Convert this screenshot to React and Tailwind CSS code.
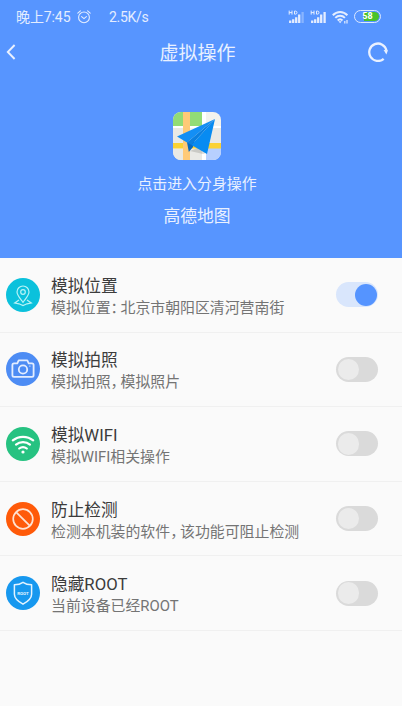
import React, { useState } from 'react';

const FONT = "font-['Roboto','Noto_Sans_CJK_SC',sans-serif]";

// Full-width punctuation, tightened so it only takes part of its em box
const Punct = ({ children }) => <span className="tracking-[-5px]">{children}</span>;

const SignalIcon = ({ full }) => (
    <svg className="h-[14px] w-[22px]" viewBox="0 0 22 14" fill="none" stroke="#e4edff">
        <path d="M1.2.6v4M4 .6v4M1.2 2.6H4M6.5 1.1v3h1.2c1.7 0 1.7-3 0-3z" strokeWidth="1" />
        <path d="M2.2 10.6V13M5.2 9.2V13M8.2 7.2V13M11.2 4.6V13" strokeWidth="2.3" />
        <path d="M14.6 2v11" strokeWidth="2.3" opacity={full ? 1 : 0.35} />
    </svg>
);

const StatusBar = () => (
    <div className="flex h-8 items-center pt-px pl-4 pr-[21px] text-[14px] leading-none text-[#e4edff]">
        <span className="w-[56px] whitespace-nowrap tracking-[-0.1px]">晚上7:45</span>
        <svg className="ml-[5px] h-[14px] w-[14px]" viewBox="0 0 14 14" fill="none" stroke="currentColor" strokeWidth="1.1" strokeLinecap="round">
            <circle cx="7" cy="7.4" r="5.4" />
            <path d="M.8 3.2 3.4.9M13.2 3.2 10.6.9M4.6 6.6 7 8.6l2.4-2" />
        </svg>
        <span className="ml-[18px] tracking-[-0.3px]">2.5K/s</span>
        <div className="ml-auto flex items-center">
            <SignalIcon />
            <SignalIcon full />
            <svg className="h-[14px] w-[17px]" viewBox="0 0 17 14" fill="none" stroke="currentColor" strokeWidth="2">
                <path d="M.8 5.2c4.2-4.3 10.4-4.3 14.6 0M3.3 7.9c2.7-2.8 6.9-2.8 9.6 0M5.7 10.5c1.4-1.4 3.4-1.4 4.8 0" />
                <path d="M6.5 11.3 8.1 13.2l1.6-1.9z" fill="currentColor" stroke="none" />
                <path d="M12.8 11V13.4M15 10V13.4" strokeWidth="1.2" />
            </svg>
            <div className="ml-[5px] flex h-[13px] w-[27px] overflow-hidden rounded-full border-[1.5px] border-[#dce8ff] p-px">
                <div className="flex h-full w-full items-center justify-center rounded-full bg-[linear-gradient(90deg,#5795ff_0_34%,#4bc32a_34%)] text-[9px] font-bold leading-none text-white">
                    58
                </div>
            </div>
        </div>
    </div>
);

const MapLogo = () => (
    <svg className="h-12 w-12" viewBox="0 0 48 48">
        <defs>
            <clipPath id="logoClip">
                <rect width="48" height="48" rx="8" />
            </clipPath>
        </defs>
        <g clipPath="url(#logoClip)">
            <path fill="#f3f3ee" d="M0 0h48v48H0z" />
            <path fill="#92dc76" d="M0 0h29v14H0z" />
            <path fill="#e9e9e5" d="M0 16h10v15H0zM33 16h15v15H33zM0 37h10v11H0zM17 37h12v11H17z" />
            <path fill="#fff" d="M29 0h4v48h-4zM0 14h48v2H0z" />
            <path fill="#b7d0ff" d="M33 36h15v12H33z" />
            <path fill="#fbd233" d="M0 31h48v5.5H0z" />
            <path fill="#ffca78" d="M10 0h7v48h-7z" />
            <path fill="#706f66" opacity=".25" d="m17 39 10-4 6 6-3 1z" />
        </g>
        <path fill="#138ff5" d="M42 7 4 24.5l10 6z" />
        <path fill="#0869bd" d="m14 30.5 1.8 9.5 4.2-5 2-8z" />
        <path fill="#078bf2" d="M42 7 18.5 33 34 42z" />
        <path fill="#0a7fe0" d="M42 7 14 30.5l4.5 2.5z" />
    </svg>
);

const LocationIcon = () => (
    <g stroke="#b9f3f6" strokeWidth="1.2">
        <path d="M17 24.3c-2.2-3-6-7-6-10.3a6 6 0 0 1 12 0c0 3.3-3.8 7.3-6 10.3z" />
        <circle cx="17" cy="14" r="2.3" />
        <path d="m13 22-4.3 3 4.3.8 4 1.7 4-1.7 4.3-.8-4.3-3" />
    </g>
);

const CameraIcon = () => (
    <g stroke="#e3edff" strokeWidth="1.8" strokeLinejoin="round">
        <path d="M8 11.3h3.3l1.4-3h8.6l1.4 3H26a1.6 1.6 0 0 1 1.6 1.6v10.3a1.6 1.6 0 0 1-1.6 1.6H8a1.6 1.6 0 0 1-1.6-1.6V12.9A1.6 1.6 0 0 1 8 11.3z" />
        <circle cx="17" cy="17.5" r="4.2" />
        <path d="M23.4 14.2h1" strokeWidth="1.3" />
    </g>
);

const WifiIcon = () => (
    <g stroke="#fff" strokeWidth="2.2" strokeLinecap="round">
        <path d="M6.8 13.4c5.8-4.8 14.6-4.8 20.4 0M10 17.6c4-3.4 10-3.4 14 0M13.2 21.5c2.3-1.8 5.3-1.8 7.6 0" />
        <circle cx="17" cy="25" r="1.6" fill="#fff" stroke="none" />
    </g>
);

const BlockIcon = () => (
    <g stroke="#ffe3d2" strokeWidth="1.7">
        <circle cx="17" cy="17" r="9.8" />
        <path d="m10.1 10.1 13.8 13.8" />
    </g>
);

const RootIcon = () => (
    <g>
        <path d="M17 6.3c2.5 1.7 5.3 2.4 8.6 2.5v9.4c0 4.3-4 7.4-8.6 10-4.6-2.6-8.6-5.7-8.6-10V8.8c3.3-.1 6.1-.8 8.6-2.5z" stroke="#e2f3ff" strokeWidth="1.5" strokeLinejoin="round" />
        <text x="17" y="18.6" textAnchor="middle" fontSize="4.4" fontWeight="700" fill="#e2f3ff">ROOT</text>
    </g>
);

const ITEMS = [
    { id: 'location', title: '模拟位置', desc: <>模拟位置<Punct>：</Punct>北京市朝阳区清河营南街</>, color: 'bg-[#0bc1dc]', Icon: LocationIcon },
    { id: 'photo', title: '模拟拍照', desc: <>模拟拍照<Punct>，</Punct>模拟照片</>, color: 'bg-[#4d8cf4]', Icon: CameraIcon },
    { id: 'wifi', title: '模拟WIFI', desc: '模拟WIFI相关操作', color: 'bg-[#26c281]', Icon: WifiIcon },
    { id: 'detect', title: '防止检测', desc: <>检测本机装的软件<Punct>，</Punct>该功能可阻止检测</>, color: 'bg-[#ff5a09]', Icon: BlockIcon },
    { id: 'root', title: '隐藏ROOT', desc: '当前设备已经ROOT', color: 'bg-[#1798ef]', Icon: RootIcon },
];

const Toggle = ({ on, onClick }) => (
    <button
        type="button"
        role="switch"
        aria-checked={on}
        onClick={onClick}
        className={`flex h-[25px] w-[42px] shrink-0 items-center rounded-full ${
            on ? 'justify-end bg-[#d9e6fc] pr-[1.5px]' : 'bg-[#dadada] pl-[1.5px]'
        }`}
    >
        <span className={`h-[21.5px] w-[21.5px] rounded-full ${on ? 'bg-[#5594ff]' : 'bg-[#ebebeb]'}`} />
    </button>
);

const App = () => {
    const [enabled, setEnabled] = useState({ location: true });

    const toggle = (id) => setEnabled((prev) => ({ ...prev, [id]: !prev[id] }));

    return (
        <div className={`h-[706px] w-full overflow-hidden bg-[#fafafa] ${FONT}`}>
            {/* Header */}
            <header className="h-[258px] bg-[#5795ff] text-[#eaf1ff]">
                <StatusBar />
                <div className="flex h-10 items-center justify-between pl-[6px] pr-[14px]">
                    <svg className="h-4 w-[10px]" viewBox="0 0 10 16" fill="none" stroke="currentColor" strokeWidth="1.9">
                        <path d="M8.6 1 1.8 8l6.8 7" />
                    </svg>
                    <h1 className="ml-[11px] pt-[2px] text-[19px] leading-none">虚拟操作</h1>
                    <svg className="h-5 w-5" viewBox="0 0 20 20" fill="none" stroke="currentColor" strokeWidth="2.3">
                        <path d="M15.7 16.8A8.7 8.7 0 1 1 18.5 8.6" />
                        <path d="m15.6 7.9 4.4.3-1.6 4.4z" fill="currentColor" stroke="none" />
                    </svg>
                </div>
                <div className="flex flex-col items-center pr-2 pt-10">
                    <MapLogo />
                    <p className="mt-[13px] text-[14.9px] leading-[22px]">点击进入分身操作</p>
                    <p className="mt-[9px] text-[16.8px] leading-6">高德地图</p>
                </div>
            </header>

            {/* Feature list */}
            <ul>
                {ITEMS.map(({ id, title, desc, color, Icon }) => (
                    <li key={id} className="flex h-[74.6px] items-center border-b border-[#f0f0f0] pl-[6px] pr-6">
                        <div className={`h-[34px] w-[34px] shrink-0 rounded-full ${color}`}>
                            <svg className="h-full w-full" viewBox="0 0 34 34" fill="none">
                                <Icon />
                            </svg>
                        </div>
                        <div className="ml-[11px] flex-1 whitespace-nowrap pt-[5px]">
                            <div className="text-[16.7px] leading-[22px] text-[#3c3c3c]">{title}</div>
                            <div className="text-[14.9px] leading-[21px] text-[#747474]">{desc}</div>
                        </div>
                        <Toggle on={!!enabled[id]} onClick={() => toggle(id)} />
                    </li>
                ))}
            </ul>
        </div>
    );
};

export default App;
